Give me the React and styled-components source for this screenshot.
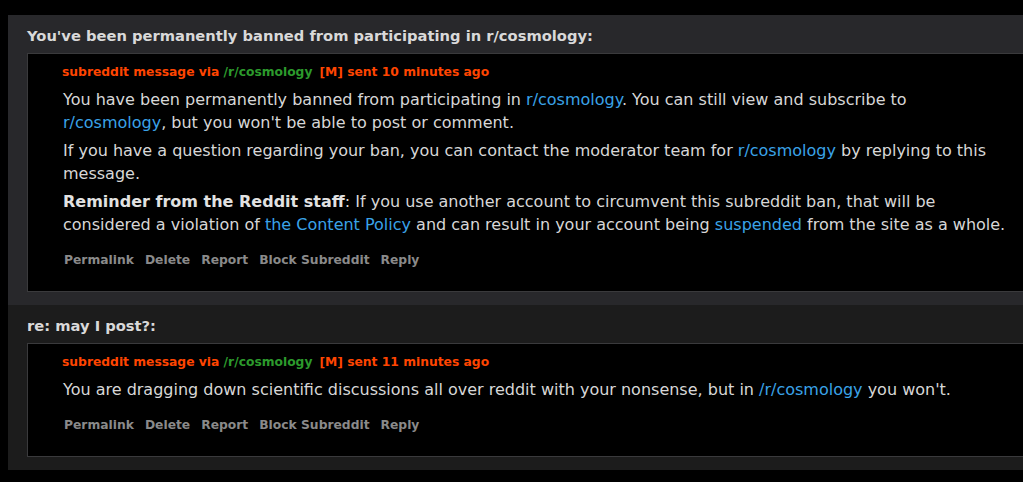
import React from "react";
import styled, { createGlobalStyle } from "styled-components";

const Global = createGlobalStyle`
  html, body {
    margin: 0;
    padding: 0;
    background: #000;
    overflow: hidden;
  }
  body {
    font-family: "DejaVu Sans", Verdana, sans-serif;
  }
`;

const Page = styled.div`
  width: 1100px;
  padding: 15px 0 0 8px;
  display: flex;
  flex-direction: column;
`;

const Panel = styled.div`
  background: ${(p) => (p.$dark ? "#1c1c1c" : "#28282b")};
  padding: 0 0 13px 19px;
`;

const Title = styled.div`
  color: #d9d9d9;
  font-weight: bold;
  font-size: 14.7px;
  line-height: 18px;
  padding: 12px 0 8px;
`;

const Inner = styled.div`
  background: #000;
  border: 1px solid #3a3a3c;
  border-right: none;
  padding: 10px 0 23px 34px;
`;

const Tagline = styled.div`
  font-size: 12.3px;
  font-weight: bold;
  line-height: 16px;
  color: #ff4500;
  margin-bottom: 8px;
`;

const Via = styled.span`
  color: #2c9a2c;
  margin-right: 7px;
`;

const Body = styled.div`
  max-width: 945px;
  color: #d7d7d7;
  font-size: 16px;
  line-height: 23px;
  padding-left: 1px;
`;

const P = styled.p`
  margin: 0 0 5px;
`;

const Link = styled.a`
  color: #3aa3e8;
  text-decoration: none;
`;

const Strong = styled.strong`
  color: #e2e2e2;
`;

const Buttons = styled.ul`
  list-style: none;
  margin: 0;
  padding: 0 0 0 2px;
  display: flex;
  gap: 11px;
  margin-top: ${(p) => p.$top}px;
`;

const Btn = styled.li`
  font-size: 12.3px;
  font-weight: bold;
  line-height: 16px;
  color: #8a8a8a;
`;

const actions = ["Permalink", "Delete", "Report", "Block Subreddit", "Reply"];

function Message({ title, minutes, dark, children, btnTop }) {
  return (
    <Panel $dark={dark}>
      <Title>{title}</Title>
      <Inner>
        <Tagline>
          subreddit message via <Via>/r/cosmology</Via>[M] sent {minutes} minutes ago
        </Tagline>
        <Body>{children}</Body>
        <Buttons $top={btnTop}>
          {actions.map((a) => (
            <Btn key={a}>{a}</Btn>
          ))}
        </Buttons>
      </Inner>
    </Panel>
  );
}

export default function App() {
  return (
    <>
      <Global />
      <Page>
        <Message
          title="You've been permanently banned from participating in r/cosmology:"
          minutes={10}
          btnTop={16}
        >
          <P>
            You have been permanently banned from participating in{" "}
            <Link>r/cosmology</Link>. You can still view and subscribe to{" "}
            <Link>r/cosmology</Link>, but you won't be able to post or comment.
          </P>
          <P>
            If you have a question regarding your ban, you can contact the
            moderator team for <Link>r/cosmology</Link> by replying to this
            message.
          </P>
          <P>
            <Strong>Reminder from the Reddit staff</Strong>: If you use another
            account to circumvent this subreddit ban, that will be considered a
            violation of <Link>the Content Policy</Link> and can result in your
            account being <Link>suspended</Link> from the site as a whole.
          </P>
        </Message>
        <Message title="re: may I post?:" minutes={11} dark btnTop={16}>
          <P>
            You are dragging down scientific discussions all over reddit with
            your nonsense, but in <Link>/r/cosmology</Link> you won't.
          </P>
        </Message>
      </Page>
    </>
  );
}
